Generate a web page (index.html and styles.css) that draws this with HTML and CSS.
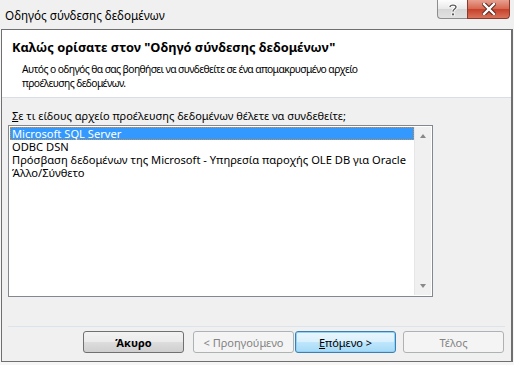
FILE: index.html
```html
<!DOCTYPE html>
<html lang="el">

<head>
    <meta charset="UTF-8">
    <meta name="viewport" content="width=device-width, initial-scale=1.0">
    <title>Οδηγός σύνδεσης δεδομένων</title>
    <link rel="stylesheet" href="styles.css">
</head>

<body>
    <div id="titlebar">
        <span class="caption">Οδηγός σύνδεσης δεδομένων</span>
        <div class="capbtns">
            <a class="help" href="javascript:;">
                <svg width="10" height="13" viewBox="0 0 10 13">
                    <path d="M2 4 C2 1.5 8 1.5 8 4 C8 6 5 6 5 8.5" fill="none" stroke="#fff" stroke-width="3.2" />
                    <path d="M2 4 C2 1.5 8 1.5 8 4 C8 6 5 6 5 8.5" fill="none" stroke="#5c5c5c" stroke-width="1.4" />
                    <rect x="3.6" y="10" width="2.8" height="2.8" fill="#5c5c5c" stroke="#fff" stroke-width="0.8" />
                </svg>
            </a>
            <a class="close" href="javascript:;">
                <svg width="14" height="12" viewBox="0 0 14 12">
                    <path d="M2 1 L12 11 M12 1 L2 11" stroke="#5a2a22" stroke-width="4.4" stroke-linecap="square" />
                    <path d="M2 1 L12 11 M12 1 L2 11" stroke="#fff" stroke-width="2.4" stroke-linecap="square" />
                </svg>
            </a>
        </div>
    </div>
    <div id="frame">
        <div id="header">
            <h1>Καλώς ορίσατε στον "Οδηγό σύνδεσης δεδομένων"</h1>
            <p>Αυτός ο οδηγός θα σας βοηθήσει να συνδεθείτε σε ένα απομακρυσμένο αρχείο προέλευσης δεδομένων.</p>
        </div>
        <div id="content">
            <label class="prompt"><u>Σ</u>ε τι είδους αρχείο προέλευσης δεδομένων θέλετε να συνδεθείτε;</label>
            <div id="listbox">
                <ul class="items">
                    <li class="selected">Microsoft SQL Server</li>
                    <li>ODBC DSN</li>
                    <li>Πρόσβαση δεδομένων της Microsoft - Υπηρεσία παροχής OLE DB για Oracle</li>
                    <li>Άλλο/Σύνθετο</li>
                </ul>
                <div class="scroll">
                    <span class="arrow up"></span>
                    <span class="arrow down"></span>
                </div>
            </div>
        </div>
        <div id="footer">
            <button class="btn cancel">Άκυρο</button>
            <button class="btn prev" disabled>&lt; Προηγούμενο</button>
            <button class="btn next"><u>Ε</u>πόμενο &gt;</button>
            <button class="btn finish" disabled>Τέλος</button>
        </div>
    </div>
</body>

</html>
```

FILE: styles.css
```css
* {
    margin: 0;
    padding: 0;
    box-sizing: border-box;
}

body {
    width: 514px;
    height: 365px;
    background-color: #f6f6f6;
    font-family: "Noto Sans", "Open Sans", sans-serif;
    font-size: 11px;
    color: #000;
    overflow: hidden;
}

#titlebar {
    height: 29px;
    display: flex;
    align-items: flex-start;
    background-color: #f0f0f0;
}

.caption {
    font-size: 11.7px;
    line-height: 15px;
    padding: 8px 0 0 5px;
    color: #000;
}

.capbtns {
    display: flex;
    margin-left: auto;
    margin-right: 4px;
}

.capbtns a {
    display: flex;
    align-items: center;
    justify-content: center;
    height: 19px;
    border: 1px solid #8d8d8d;
    border-top: none;
}

.help {
    width: 30px;
    border-right: none !important;
    border-radius: 0 0 0 4px;
    background: linear-gradient(#fdfdfd, #e8e8e8 50%, #d6d6d6 51%, #e1e1e1);
}

.close {
    width: 43px;
    border-color: #8c3a2c !important;
    border-radius: 0 0 4px 0;
    background: linear-gradient(#e8a090, #d5664f 50%, #c7402a 51%, #d9725a);
}

#frame {
    width: 512px;
    height: 333px;
    margin-left: 1px;
    border: 1px solid #6f6f6f;
    border-right-width: 2px;
    display: flex;
    flex-direction: column;
    background-color: #f0f0f0;
}

#header {
    height: 68px;
    background-color: #fff;
    border-bottom: 1px solid #d8dee4;
    padding: 9px 0 0 10px;
}

h1 {
    font-family: "Noto Sans", sans-serif;
    font-size: 12.8px;
    font-weight: bold;
    line-height: 16px;
}

#header p {
    width: 350px;
    margin: 7px 0 0 10px;
    font-size: 10.3px;
    letter-spacing: -0.58px;
    line-height: 14px;
}

#content {
    padding: 11px 0 0 6px;
}

.prompt {
    display: block;
    padding-left: 4px;
    font-size: 11px;
    line-height: 14px;
}

#listbox {
    display: flex;
    width: 425px;
    height: 172px;
    margin-top: 2px;
    border: 1px solid #828790;
    background-color: #fff;
}

.items {
    list-style: none;
    flex: 1;
    padding: 1px 0 0 1px;
}

.items li {
    height: 13px;
    line-height: 13px;
    padding-left: 2px;
    font-size: 11.15px;
    white-space: nowrap;
}

.items li.selected {
    width: 404px;
    background-color: #3399ff;
    color: #fff;
    outline: 1px dotted #e08b2a;
    outline-offset: -1px;
}

.scroll {
    width: 17px;
    margin: 1px 1px 1px 0;
    background-color: #f0f0f0;
    border-left: 1px solid #e6e6e6;
    display: flex;
    flex-direction: column;
    justify-content: space-between;
    align-items: center;
    padding: 7px 0 7px;
}

.arrow {
    width: 0;
    height: 0;
    border-left: 3.5px solid transparent;
    border-right: 3.5px solid transparent;
}

.arrow.up {
    border-bottom: 4px solid #888;
}

.arrow.down {
    border-top: 4px solid #888;
}

#footer {
    margin: auto 6px 8px 6px;
    padding-top: 4px;
    border-top: 1px solid #dbe3ec;
    display: flex;
}

.btn {
    width: 101px;
    height: 22px;
    font-family: "Noto Sans", "Open Sans", sans-serif;
    font-size: 11px;
    border: 1px solid #707070;
    border-radius: 3px;
    background: linear-gradient(#f2f2f2, #ebebeb 50%, #dddddd 51%, #cfcfcf);
    color: #000;
}

.cancel {
    margin-left: 75px;
    font-weight: bold;
}

.prev {
    margin-left: 9px;
}

.next {
    margin-left: 1px;
    border-color: #3c7fb1;
    box-shadow: inset 0 0 0 1px #8fd3f8;
    background: linear-gradient(#eaf6fd, #d9f0fc 50%, #bee6fd 51%, #a7d9f5);
}

.finish {
    margin-left: 7px;
}

.btn:disabled {
    border-color: #adb2b5;
    background: #f4f4f4;
    color: #838383;
}
```
